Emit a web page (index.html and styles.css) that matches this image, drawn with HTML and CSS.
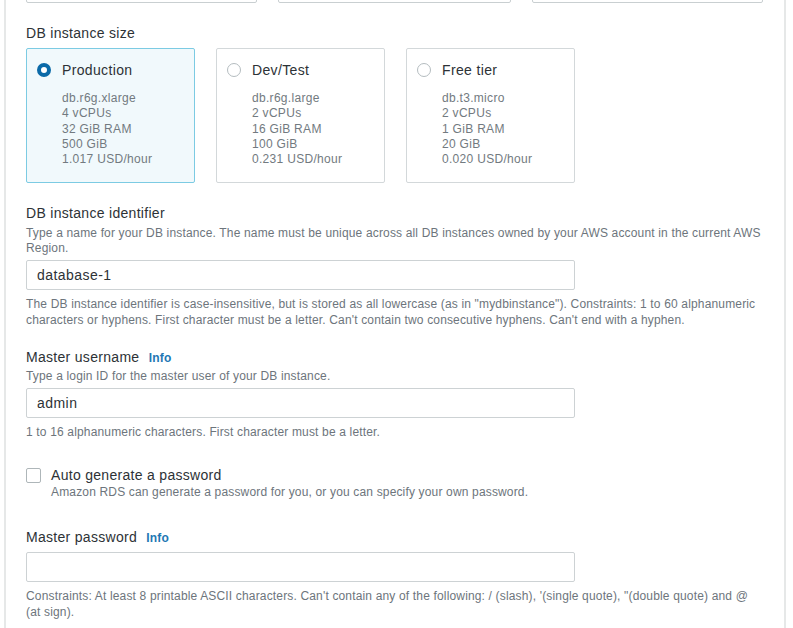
FILE: index.html
```html
<!DOCTYPE html>
<html>
<head>
<meta charset="utf-8">
<link rel="stylesheet" href="styles.css">
</head>
<body>
<div class="panel">
  <div class="top-row">
    <div class="top-box w1"></div>
    <div class="top-box w2"></div>
    <div class="top-box w3"></div>
  </div>

  <div class="field size-field">
    <div class="label">DB instance size</div>
    <div class="cards">
      <div class="card selected">
        <div class="card-head"><span class="radio on"></span><span class="card-title">Production</span></div>
        <div class="card-body">
          <div>db.r6g.xlarge</div>
          <div>4 vCPUs</div>
          <div>32 GiB RAM</div>
          <div>500 GiB</div>
          <div>1.017 USD/hour</div>
        </div>
      </div>
      <div class="card">
        <div class="card-head"><span class="radio"></span><span class="card-title">Dev/Test</span></div>
        <div class="card-body">
          <div>db.r6g.large</div>
          <div>2 vCPUs</div>
          <div>16 GiB RAM</div>
          <div>100 GiB</div>
          <div>0.231 USD/hour</div>
        </div>
      </div>
      <div class="card">
        <div class="card-head"><span class="radio"></span><span class="card-title">Free tier</span></div>
        <div class="card-body">
          <div>db.t3.micro</div>
          <div>2 vCPUs</div>
          <div>1 GiB RAM</div>
          <div>20 GiB</div>
          <div>0.020 USD/hour</div>
        </div>
      </div>
    </div>
  </div>

  <div class="field id-field">
    <div class="label">DB instance identifier</div>
    <div class="desc">Type a name for your DB instance. The name must be unique across all DB instances owned by your AWS account in the current AWS Region.</div>
    <div class="input">database-1</div>
    <div class="hint">The DB instance identifier is case-insensitive, but is stored as all lowercase (as in "mydbinstance"). Constraints: 1 to 60 alphanumeric characters or hyphens. First character must be a letter. Can't contain two consecutive hyphens. Can't end with a hyphen.</div>
  </div>

  <div class="field user-field">
    <div class="label">Master username <span class="info">Info</span></div>
    <div class="desc">Type a login ID for the master user of your DB instance.</div>
    <div class="input">admin</div>
    <div class="hint">1 to 16 alphanumeric characters. First character must be a letter.</div>
  </div>

  <div class="check-field">
    <span class="checkbox"></span>
    <div class="check-text">
      <div class="check-label">Auto generate a password</div>
      <div class="desc">Amazon RDS can generate a password for you, or you can specify your own password.</div>
    </div>
  </div>

  <div class="field pass-field">
    <div class="label">Master password <span class="info">Info</span></div>
    <div class="input"></div>
    <div class="hint">Constraints: At least 8 printable ASCII characters. Can't contain any of the following: / (slash), '(single quote), "(double quote) and @ (at sign).</div>
  </div>
</div>
</body>
</html>
```

FILE: styles.css
```css
* { box-sizing: border-box; }
html, body {
  margin: 0;
  padding: 0;
  background: #ffffff;
}
body {
  font-family: "Liberation Sans", Arial, sans-serif;
  color: #2b2f33;
  width: 793px;
  height: 628px;
  overflow: hidden;
}
.panel {
  margin-left: 4px;
  width: 782px;
  height: 628px;
  border-left: 2px solid #e6e8e8;
  border-right: 2px solid #e6e8e8;
  padding-left: 20px;
  background: #ffffff;
}
.top-row {
  display: flex;
  align-items: flex-end;
  height: 3px;
  overflow: hidden;
  gap: 21px;
}
.top-box {
  height: 30px;
  border: 1px solid #c9cfd1;
  border-radius: 2px;
  flex: none;
}
.w1 { width: 231px; }
.w2 { width: 233px; }
.w3 { width: 231px; }

.field { max-width: 738px; }

.label {
  font-size: 14px;
  line-height: 20px;
  letter-spacing: 0.3px;
  color: #2d3236;
}
.info {
  font-size: 12px;
  font-weight: bold;
  letter-spacing: 0.2px;
  color: #1f78b4;
  margin-left: 5px;
}
.desc, .hint {
  font-size: 12px;
  line-height: 15px;
  letter-spacing: 0.16px;
  color: #6d757c;
}
.hint { line-height: 16px; }

.size-field { margin-top: 20px; }
.cards {
  display: flex;
  gap: 21px;
  margin-top: 5px;
}
.card {
  width: 169px;
  height: 135px;
  border: 1px solid #d3d8da;
  border-radius: 2px;
  padding: 11px 10px 0 10px;
  background: #ffffff;
}
.card.selected {
  background: #f1f9fc;
  border-color: #7ccbe3;
}
.card-head {
  display: flex;
  align-items: center;
  height: 20px;
}
.radio {
  width: 14px;
  height: 14px;
  border-radius: 50%;
  border: 1.5px solid #b4bcbf;
  background: #fff;
  flex: none;
  margin-right: 11px;
}
.radio.on {
  border: 4px solid #0b6aa8;
}
.card-title {
  font-size: 14px;
  letter-spacing: 0.35px;
  color: #2d3236;
}
.card-body {
  margin-top: 11px;
  padding-left: 25px;
  font-size: 12px;
  line-height: 15.25px;
  letter-spacing: 0.3px;
  color: #727a80;
}

.id-field { margin-top: 20px; }
.id-field .desc { margin-top: 3px; }
.input {
  width: 549px;
  height: 30px;
  border: 1px solid #cdd2d4;
  border-radius: 2px;
  background: #fff;
  font-size: 14px;
  line-height: 28px;
  letter-spacing: 0.45px;
  padding-left: 10px;
  color: #2d3236;
}
.id-field .input { margin-top: 4px; }
.id-field .hint { margin-top: 6px; }

.user-field { margin-top: 19px; }
.user-field .desc { margin-top: 1px; }
.user-field .input { margin-top: 4px; }
.user-field .hint { margin-top: 6px; }

.check-field {
  display: flex;
  align-items: flex-start;
  margin-top: 27px;
}
.checkbox {
  width: 15px;
  height: 15px;
  border: 1.5px solid #aeb6b9;
  border-radius: 2px;
  margin-top: 1px;
  margin-right: 10px;
  flex: none;
}
.check-label {
  font-size: 14px;
  line-height: 17px;
  letter-spacing: 0.3px;
  color: #2d3236;
}
.check-text .desc { margin-top: 1px; }

.pass-field { margin-top: 27px; }
.pass-field .input { margin-top: 4px; }
.pass-field .hint { margin-top: 6px; }
```
